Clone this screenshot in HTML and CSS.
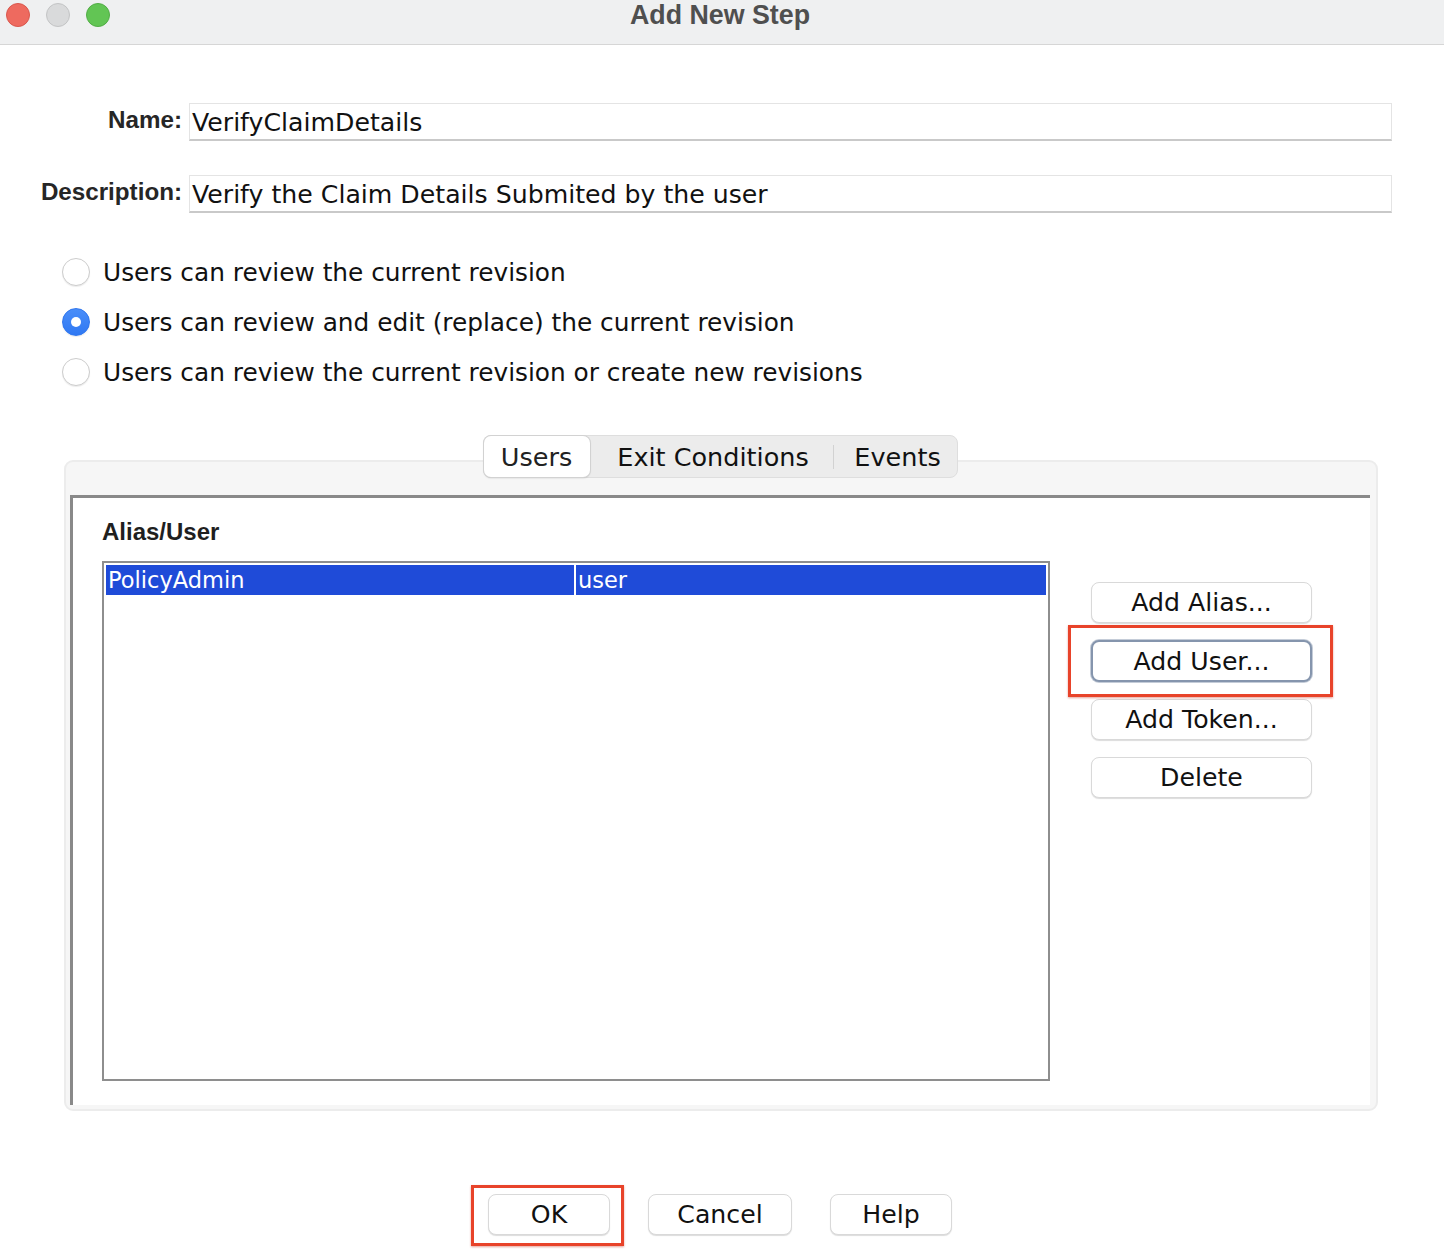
FILE: index.html
```html
<!DOCTYPE html>
<html>
<head>
<meta charset="utf-8">
<link rel="stylesheet" href="styles.css">
</head>
<body>
<div class="window">
  <div class="titlebar">
    <div class="lights">
      <span class="light red"></span>
      <span class="light gray"></span>
      <span class="light green"></span>
    </div>
    <div class="title">Add New Step</div>
    <div class="spacer"></div>
  </div>

  <div class="form">
    <label class="label">Name:</label>
    <div class="field">VerifyClaimDetails</div>
    <label class="label">Description:</label>
    <div class="field">Verify the Claim Details Submited by the user</div>
  </div>

  <div class="radios">
    <div class="radio-row"><span class="radio"></span><span class="radio-text">Users can review the current revision</span></div>
    <div class="radio-row"><span class="radio checked"></span><span class="radio-text">Users can review and edit (replace) the current revision</span></div>
    <div class="radio-row"><span class="radio"></span><span class="radio-text">Users can review the current revision or create new revisions</span></div>
  </div>

  <div class="tabs-wrap">
    <div class="tabs">
      <div class="tab tab-users active">Users</div>
      <div class="tab tab-exit">Exit Conditions</div>
      <div class="tab-sep"></div>
      <div class="tab tab-events">Events</div>
    </div>
  </div>

  <div class="panel">
    <div class="panel-inner">
      <div class="heading">Alias/User</div>
      <div class="content-row">
        <div class="table">
          <div class="row selected">
            <div class="cell c1">PolicyAdmin</div>
            <div class="cell c2">user</div>
          </div>
        </div>
        <div class="side-buttons">
          <button class="btn side">Add Alias...</button>
          <div class="mark-wrap">
            <button class="btn side focused">Add User...</button>
            <span class="redbox redbox-user"></span>
          </div>
          <button class="btn side">Add Token...</button>
          <button class="btn side">Delete</button>
        </div>
      </div>
    </div>
  </div>

  <div class="footer">
    <div class="mark-wrap">
      <button class="btn foot ok">OK</button>
      <span class="redbox redbox-ok"></span>
    </div>
    <button class="btn foot cancel">Cancel</button>
    <button class="btn foot help">Help</button>
  </div>
</div>
</body>
</html>
```

FILE: styles.css
```css
* { box-sizing: border-box; }
html, body { margin: 0; padding: 0; background: #ffffff; }
body {
  font-family: "DejaVu Sans", "Noto Sans", sans-serif;
  color: #111;
  width: 1444px;
  height: 1258px;
  overflow: hidden;
}
.window { display: flex; flex-direction: column; }

.titlebar {
  height: 45px;
  background: #eff0f1;
  border-bottom: 1px solid #d6d6d6;
  display: grid;
  grid-template-columns: 1fr auto 1fr;
  align-items: start;
  padding-top: 3px;
}
.lights { display: flex; gap: 16px; padding-left: 6px; }
.light {
  width: 24px; height: 24px; border-radius: 50%;
  display: block;
}
.light.red { background: #ee6a5f; border: 1px solid #d9574d; }
.light.gray { background: #d9dadb; border: 1px solid #c3c4c5; }
.light.green { background: #62c554; border: 1px solid #52ad46; }
.title {
  font-family: "Liberation Sans", Arial, sans-serif;
  font-weight: bold;
  font-size: 26.8px;
  color: #4f4f4f;
  line-height: 24px;
  margin-left: -4px;
}

.form {
  display: grid;
  grid-template-columns: 182px 1203px;
  column-gap: 7px;
  row-gap: 34px;
  margin-top: 58px;
  align-items: center;
}
.label {
  font-family: "Liberation Sans", Arial, sans-serif;
  font-weight: bold;
  font-size: 24.2px;
  color: #262626;
  text-align: right;
  margin-top: -4px;
}
.field {
  height: 38px;
  border: 1px solid #e4e4e4;
  border-bottom: 2px solid #c9c9c9;
  background: #fff;
  font-size: 25.2px;
  line-height: 38px;
  padding-left: 2px;
  color: #111;
}

.radios { margin-top: 34px; display: flex; flex-direction: column; padding-left: 62px; }
.radio-row { height: 50px; display: flex; align-items: center; gap: 13px; }
.radio {
  width: 28px; height: 28px; border-radius: 50%;
  background: #fff;
  border: 1px solid #cdcdcd;
  box-shadow: 0 1px 1px rgba(0,0,0,0.08);
  display: flex; align-items: center; justify-content: center;
}
.radio.checked {
  background: linear-gradient(#4a8ef9, #2f78f3);
  border-color: #2f76ee;
}
.radio.checked::after {
  content: ""; width: 10px; height: 10px; border-radius: 50%; background: #fff;
}
.radio-text { font-size: 24.8px; color: #111; }

.tabs-wrap { display: flex; justify-content: center; margin-top: 38px; position: relative; z-index: 1; }
.tabs {
  display: flex; align-items: center;
  height: 43px;
  background: #ececec;
  border: 1px solid #dedede;
  border-radius: 8px;
  margin-left: -4px;
}
.tab {
  height: 41px;
  font-size: 25.5px;
  display: flex; align-items: center; justify-content: center;
  color: #111;
}
.tab.active {
  background: #fff;
  border-radius: 7px;
  box-shadow: 0 0 0 1px #d2d2d2, 0 1px 2px rgba(0,0,0,0.2);
  color: #222;
}
.tab-users { width: 106px; }
.tab-exit { width: 243px; padding-left: 4px; }
.tab-sep { width: 1px; height: 24px; background: #d2d2d2; }
.tab-events { width: 123px; padding-left: 5px; }

.panel {
  margin: -18px 0 0 64px;
  width: 1314px;
  height: 651px;
  background: #f6f6f6;
  border: 2px solid #ececec;
  border-radius: 9px;
  padding: 33px 6px 4px 4px;
  display: flex;
}
.panel-inner {
  flex: 1;
  background: #fff;
  border-top: 3px solid #898989;
  border-left: 3px solid #898989;
  padding: 20px 0 0 29px;
}
.heading {
  font-family: "Liberation Sans", Arial, sans-serif;
  font-weight: bold;
  font-size: 24px;
  color: #1f1f1f;
  height: 30px;
  line-height: 28px;
}
.content-row { display: flex; margin-top: 13px; }
.table {
  width: 948px;
  height: 520px;
  border: 2px solid #8e8e8e;
  padding: 2px;
}
.row { display: flex; height: 30px; }
.row.selected .cell { background: #1f4bd8; color: #fff; }
.cell {
  font-size: 22.5px;
  line-height: 31px;
  padding-left: 2px;
}
.c1 { width: 468px; margin-right: 2px; }
.c2 { flex: 1; }

.side-buttons {
  margin-left: 41px;
  margin-top: 21px;
  display: flex; flex-direction: column; gap: 17px;
}
.btn {
  font-family: "DejaVu Sans", "Noto Sans", sans-serif;
  font-size: 25.2px;
  color: #111;
  background: #fff;
  border: 1px solid #d9d9d9;
  border-radius: 8px;
  box-shadow: 0 1px 1px rgba(0,0,0,0.14);
  padding: 0;
  display: flex; align-items: center; justify-content: center;
}
.btn.side { width: 221px; height: 41px; }
.btn.side.focused { height: 42px; border: 2px solid #8595ad; box-shadow: 0 0 0 1px #c4ccd8; }

.mark-wrap { position: relative; }
.redbox {
  position: absolute;
  border: 3px solid #e8432a;
  box-shadow: 0 1px 2px rgba(200,50,30,0.45);
  pointer-events: none;
}
.redbox-user { left: -23px; right: -21px; top: -15px; bottom: -15px; }
.redbox-ok { left: -17px; right: -14px; top: -9px; bottom: -11px; }

.footer {
  display: flex; justify-content: center; gap: 38px;
  margin-top: 83px;
  padding-right: 4px;
}
.btn.foot { height: 41px; }
.ok { width: 122px; }
.cancel { width: 144px; }
.help { width: 122px; }
```
